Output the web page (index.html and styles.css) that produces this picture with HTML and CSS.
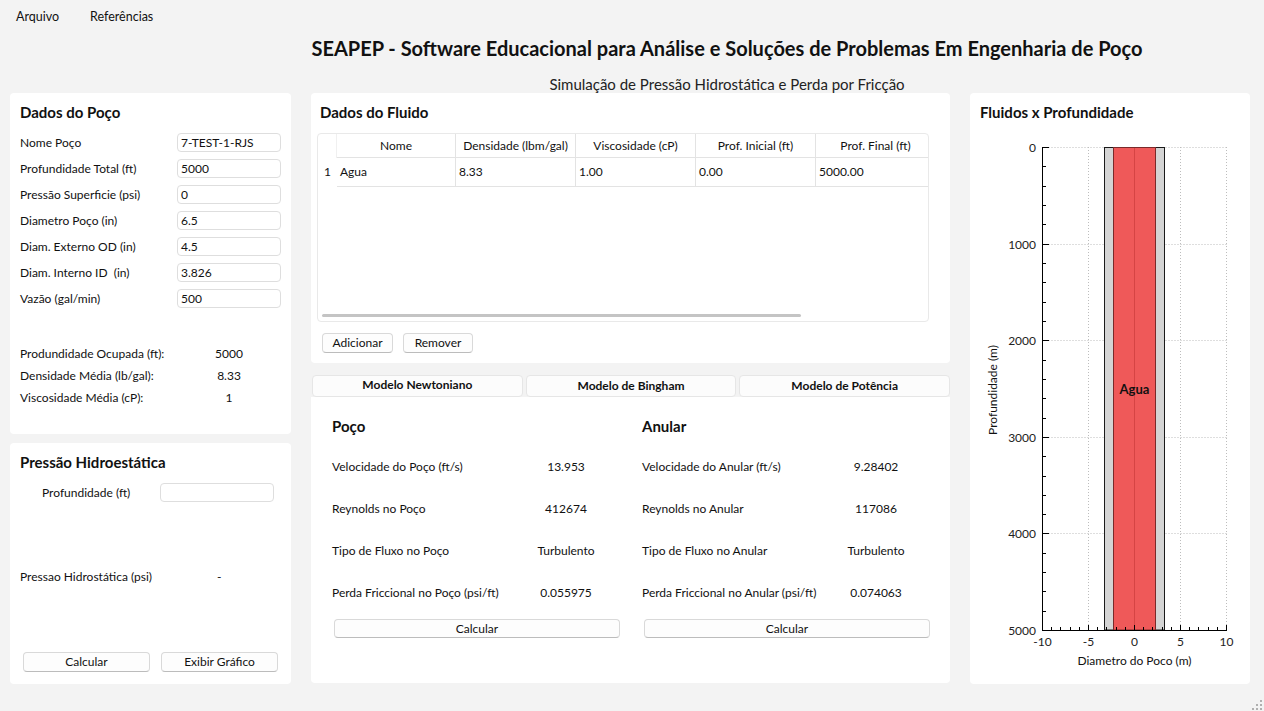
FILE: index.html
```
<!DOCTYPE html>
<html lang="pt">
<head>
<meta charset="utf-8">
<title>SEAPEP</title>
<link rel="stylesheet" href="styles.css">
</head>
<body>
<div class="menubar">
  <span class="menu-item">Arquivo</span>
  <span class="menu-item">Referências</span>
</div>
<div class="header">
  <div class="title">SEAPEP - Software Educacional para Análise e Soluções de Problemas Em Engenharia de Poço</div>
  <div class="subtitle">Simulação de Pressão Hidrostática e Perda por Fricção</div>
</div>
<div class="main">
  <div class="col-left">
    <div class="panel panel-poco">
      <div class="panel-title">Dados do Poço</div>
      <div class="form-grid">
        <span class="lbl">Nome Poço</span><div class="input">7-TEST-1-RJS</div>
        <span class="lbl">Profundidade Total (ft)</span><div class="input">5000</div>
        <span class="lbl">Pressão Superficie (psi)</span><div class="input">0</div>
        <span class="lbl">Diametro Poço (in)</span><div class="input">6.5</div>
        <span class="lbl">Diam. Externo OD (in)</span><div class="input">4.5</div>
        <span class="lbl">Diam. Interno ID &nbsp;(in)</span><div class="input">3.826</div>
        <span class="lbl">Vazão (gal/min)</span><div class="input">500</div>
      </div>
      <div class="summary-grid">
        <span>Produndidade Ocupada (ft):</span><span class="val">5000</span>
        <span>Densidade Média (lb/gal):</span><span class="val">8.33</span>
        <span>Viscosidade Média (cP):</span><span class="val">1</span>
      </div>
    </div>
    <div class="panel panel-hidro">
      <div class="panel-title">Pressão Hidroestática</div>
      <div class="hidro-row">
        <span class="hidro-lbl">Profundidade (ft)</span><div class="input input-hidro"></div>
      </div>
      <div class="hidro-result">
        <span class="hidro-res-lbl">Pressao Hidrostática (psi)</span><span>-</span>
      </div>
      <div class="hidro-buttons">
        <div class="btn btn-calc-l">Calcular</div>
        <div class="btn btn-graf">Exibir Gráfico</div>
      </div>
    </div>
  </div>

  <div class="col-mid">
    <div class="panel panel-fluido">
      <div class="panel-title">Dados do Fluido</div>
      <div class="table">
        <div class="trow thead">
          <div class="cell idx hidx"></div>
          <div class="cell hc">Nome</div>
          <div class="cell hc">Densidade (lbm/gal)</div>
          <div class="cell hc">Viscosidade (cP)</div>
          <div class="cell hc">Prof. Inicial (ft)</div>
          <div class="cell hc">Prof. Final (ft)</div>
        </div>
        <div class="trow tdata">
          <div class="cell idx">1</div>
          <div class="cell dc">Agua</div>
          <div class="cell dc">8.33</div>
          <div class="cell dc">1.00</div>
          <div class="cell dc">0.00</div>
          <div class="cell dc">5000.00</div>
        </div>
        <div class="hscroll"></div>
      </div>
      <div class="fluid-buttons">
        <div class="btn btn-add">Adicionar</div>
        <div class="btn btn-rem">Remover</div>
      </div>
    </div>
    <div class="tabs">
      <div class="tab tab-active">Modelo Newtoniano</div>
      <div class="tab">Modelo de Bingham</div>
      <div class="tab">Modelo de Potência</div>
    </div>
    <div class="tab-content">
      <div class="res-col">
        <div class="res-title">Poço</div>
        <div class="res-row"><span class="res-lbl">Velocidade do Poço (ft/s)</span><span class="res-val">13.953</span></div>
        <div class="res-row"><span class="res-lbl">Reynolds no Poço</span><span class="res-val">412674</span></div>
        <div class="res-row"><span class="res-lbl">Tipo de Fluxo no Poço</span><span class="res-val">Turbulento</span></div>
        <div class="res-row"><span class="res-lbl">Perda Friccional no Poço (psi/ft)</span><span class="res-val">0.055975</span></div>
        <div class="btn btn-res">Calcular</div>
      </div>
      <div class="res-col res-col-right">
        <div class="res-title">Anular</div>
        <div class="res-row"><span class="res-lbl">Velocidade do Anular (ft/s)</span><span class="res-val">9.28402</span></div>
        <div class="res-row"><span class="res-lbl">Reynolds no Anular</span><span class="res-val">117086</span></div>
        <div class="res-row"><span class="res-lbl">Tipo de Fluxo no Anular</span><span class="res-val">Turbulento</span></div>
        <div class="res-row"><span class="res-lbl">Perda Friccional no Anular (psi/ft)</span><span class="res-val">0.074063</span></div>
        <div class="btn btn-res">Calcular</div>
      </div>
    </div>
  </div>

  <div class="col-right panel">
    <div class="panel-title chart-title">Fluidos x Profundidade</div>
    <svg class="chart" width="280" height="551" viewBox="0 0 280 551" xmlns="http://www.w3.org/2000/svg">
      <g stroke="#bdbdbd" stroke-width="1" stroke-dasharray="1 2" fill="none">
        <line x1="72.5" y1="14.5" x2="256.5" y2="14.5"/>
        <line x1="72.5" y1="111.5" x2="256.5" y2="111.5"/>
        <line x1="72.5" y1="207.5" x2="256.5" y2="207.5"/>
        <line x1="72.5" y1="304.5" x2="256.5" y2="304.5"/>
        <line x1="72.5" y1="400.5" x2="256.5" y2="400.5"/>
        <line x1="118.5" y1="14" x2="118.5" y2="497"/>
        <line x1="164.5" y1="14" x2="164.5" y2="497"/>
        <line x1="210.5" y1="14" x2="210.5" y2="497"/>
        <line x1="256.5" y1="14" x2="256.5" y2="497"/>
      </g>
      <rect x="134.5" y="14.5" width="60" height="482.5" fill="#d4d4d4" stroke="#1a1a1a" stroke-width="1"/>
      <rect x="143.5" y="14.5" width="42" height="482.5" fill="#ef5959" stroke="#7a2a2a" stroke-width="1"/>
      <line x1="164.5" y1="15" x2="164.5" y2="497" stroke="#d64444" stroke-width="1"/>
      <text x="164.5" y="261" class="chart-label" text-anchor="middle">Agua</text>
      <g stroke="#000" stroke-width="1">
        <line x1="72.5" y1="14" x2="72.5" y2="497.5"/>
        <line x1="72" y1="497.5" x2="257" y2="497.5"/>
        <line x1="72.5" y1="14.5" x2="79" y2="14.5"/>
        <line x1="72.5" y1="111.5" x2="79" y2="111.5"/>
        <line x1="72.5" y1="207.5" x2="79" y2="207.5"/>
        <line x1="72.5" y1="304.5" x2="79" y2="304.5"/>
        <line x1="72.5" y1="400.5" x2="79" y2="400.5"/>
        <line x1="72.5" y1="33.5" x2="76" y2="33.5"/>
        <line x1="72.5" y1="53.5" x2="76" y2="53.5"/>
        <line x1="72.5" y1="72.5" x2="76" y2="72.5"/>
        <line x1="72.5" y1="91.5" x2="76" y2="91.5"/>
        <line x1="72.5" y1="130.5" x2="76" y2="130.5"/>
        <line x1="72.5" y1="149.5" x2="76" y2="149.5"/>
        <line x1="72.5" y1="169.5" x2="76" y2="169.5"/>
        <line x1="72.5" y1="188.5" x2="76" y2="188.5"/>
        <line x1="72.5" y1="227.5" x2="76" y2="227.5"/>
        <line x1="72.5" y1="246.5" x2="76" y2="246.5"/>
        <line x1="72.5" y1="265.5" x2="76" y2="265.5"/>
        <line x1="72.5" y1="285.5" x2="76" y2="285.5"/>
        <line x1="72.5" y1="323.5" x2="76" y2="323.5"/>
        <line x1="72.5" y1="343.5" x2="76" y2="343.5"/>
        <line x1="72.5" y1="362.5" x2="76" y2="362.5"/>
        <line x1="72.5" y1="381.5" x2="76" y2="381.5"/>
        <line x1="72.5" y1="420.5" x2="76" y2="420.5"/>
        <line x1="72.5" y1="439.5" x2="76" y2="439.5"/>
        <line x1="72.5" y1="458.5" x2="76" y2="458.5"/>
        <line x1="72.5" y1="478.5" x2="76" y2="478.5"/>
        <line x1="118.5" y1="497" x2="118.5" y2="492"/>
        <line x1="164.5" y1="497" x2="164.5" y2="492"/>
        <line x1="210.5" y1="497" x2="210.5" y2="492"/>
        <line x1="256.5" y1="497" x2="256.5" y2="492"/>
        <line x1="81.5" y1="497" x2="81.5" y2="494"/>
        <line x1="90.5" y1="497" x2="90.5" y2="494"/>
        <line x1="100.5" y1="497" x2="100.5" y2="494"/>
        <line x1="109.5" y1="497" x2="109.5" y2="494"/>
        <line x1="127.5" y1="497" x2="127.5" y2="494"/>
        <line x1="136.5" y1="497" x2="136.5" y2="494"/>
        <line x1="146.5" y1="497" x2="146.5" y2="494"/>
        <line x1="155.5" y1="497" x2="155.5" y2="494"/>
        <line x1="173.5" y1="497" x2="173.5" y2="494"/>
        <line x1="182.5" y1="497" x2="182.5" y2="494"/>
        <line x1="192.5" y1="497" x2="192.5" y2="494"/>
        <line x1="201.5" y1="497" x2="201.5" y2="494"/>
        <line x1="219.5" y1="497" x2="219.5" y2="494"/>
        <line x1="228.5" y1="497" x2="228.5" y2="494"/>
        <line x1="238.5" y1="497" x2="238.5" y2="494"/>
        <line x1="247.5" y1="497" x2="247.5" y2="494"/>
      </g>
      <g class="tick-label" text-anchor="end">
        <text x="66" y="18.5">0</text>
        <text x="66" y="115.5">1000</text>
        <text x="66" y="211.5">2000</text>
        <text x="66" y="308.5">3000</text>
        <text x="66" y="404.5">4000</text>
        <text x="66" y="501.5">5000</text>
      </g>
      <g class="tick-label" text-anchor="middle">
        <text x="72.5" y="513">-10</text>
        <text x="118.5" y="513">-5</text>
        <text x="164.5" y="513">0</text>
        <text x="210.5" y="513">5</text>
        <text x="256.5" y="513">10</text>
      </g>
      <text class="axis-title" x="164.5" y="532" text-anchor="middle">Diametro do Poco (m)</text>
      <text class="axis-title" x="0" y="0" text-anchor="middle" transform="translate(27 257) rotate(-90)">Profundidade (m)</text>
    </svg>
  </div>
</div>
<svg class="grip" width="10" height="10" viewBox="0 0 10 10" xmlns="http://www.w3.org/2000/svg">
  <g fill="#b0b0b0">
    <rect x="8" y="0" width="2" height="2"/>
    <rect x="4" y="4" width="2" height="2"/><rect x="8" y="4" width="2" height="2"/>
    <rect x="0" y="8" width="2" height="2"/><rect x="4" y="8" width="2" height="2"/><rect x="8" y="8" width="2" height="2"/>
  </g>
</svg>
</body>
</html>
```
FILE: styles.css
```
* { box-sizing: border-box; }
html, body { margin: 0; padding: 0; }
body {
  width: 1264px;
  height: 711px;
  overflow: hidden;
  position: relative;
  background: #f3f3f3;
  font-family: Lato, "Noto Sans", sans-serif;
  font-size: 12px;
  color: #111;
}

.menubar {
  height: 32px;
  display: flex;
  align-items: center;
  padding-left: 16px;
}
.menu-item { margin-right: 31px; font-size: 12.5px; }

.header { padding-left: 190px; text-align: center; }
.title {
  margin-top: 4px;
  line-height: 24px;
  font-size: 20px;
  font-weight: 700;
  color: #111;
}
.subtitle {
  margin-top: 15px;
  line-height: 18px;
  font-size: 15px;
  color: #222;
}

.main {
  display: flex;
  gap: 20px;
  padding: 0 10px;
  height: 591px;
}
.panel { background: #fff; border-radius: 4px; }
.panel-title {
  line-height: 20px;
  font-size: 15px;
  font-weight: 700;
  color: #111;
  padding-top: 9px;
}

.col-left { width: 281px; display: flex; flex-direction: column; gap: 9px; }
.panel-poco { height: 341px; padding: 0 10px; }
.form-grid {
  margin-top: 11px;
  display: grid;
  grid-template-columns: 157px 104px;
  grid-auto-rows: 19px;
  row-gap: 7px;
  align-items: center;
}
.input {
  height: 19px;
  border: 1px solid #dedede;
  border-radius: 4px;
  padding: 0 3px;
  line-height: 17px;
  background: #fff;
  white-space: nowrap;
  overflow: hidden;
}
.summary-grid {
  margin-top: 34px;
  display: grid;
  grid-template-columns: 170px 78px;
  grid-auto-rows: 22px;
  align-items: center;
}
.summary-grid .val { text-align: center; }

.panel-hidro { height: 241px; padding: 0 10px 12px; display: flex; flex-direction: column; }
.hidro-row { margin-top: 11px; display: flex; align-items: center; padding-left: 22px; }
.hidro-lbl { width: 118px; }
.input-hidro { width: 114px; }
.hidro-result { margin-top: 66px; display: flex; line-height: 18px; }
.hidro-res-lbl { width: 197px; }
.hidro-buttons { margin-top: auto; display: flex; gap: 11px; padding-left: 3px; }
.btn {
  height: 20px;
  background: #fdfdfd;
  border: 1px solid #d9d9d9;
  border-bottom-color: #bcbcbc;
  border-radius: 4px;
  text-align: center;
  line-height: 18px;
  color: #111;
}
.btn-calc-l { width: 127px; }
.btn-graf { width: 117px; }

.col-mid { width: 639px; display: flex; flex-direction: column; }
.panel-fluido { height: 270px; padding-left: 9px; }
.table {
  position: relative;
  margin-top: 11px;
  margin-left: -3px;
  width: 612px;
  height: 189px;
  border: 1px solid #e9e9e9;
  border-radius: 4px;
  overflow: hidden;
}
.trow { display: grid; grid-template-columns: 19px 119px 120px 120px 120px 120px; }
.thead { height: 24px; }
.tdata { height: 29px; }
.cell { white-space: nowrap; overflow: hidden; }
.hc {
  text-align: center;
  line-height: 23px;
  border-right: 1px solid #e3e3e3;
  border-bottom: 1px solid #e3e3e3;
}
.dc {
  line-height: 28px;
  padding-left: 3px;
  border-right: 1px solid #e3e3e3;
  border-bottom: 1px solid #e3e3e3;
}
.idx { text-align: center; line-height: 28px; }
.hidx { border-right: 1px solid #f0f0f0; }
.hscroll {
  position: absolute;
  left: 4px;
  bottom: 4px;
  width: 479px;
  height: 3px;
  border-radius: 2px;
  background: #c4c4c4;
}
.fluid-buttons { margin-top: 11px; display: flex; gap: 10px; padding-left: 2px; }
.btn-add { width: 71px; }
.btn-rem { width: 70px; }

.tabs { margin-top: 12px; display: flex; gap: 3px; height: 22px; padding-left: 1px; }
.tab {
  flex: 1;
  background: #fcfcfc;
  border: 1px solid #e6e6e6;
  border-radius: 4px;
  text-align: center;
  font-weight: 700;
  line-height: 20px;
  font-size: 12px;
  color: #111;
}
.tab-active { line-height: 18px; }
.tab-content {
  height: 286px;
  background: #fff;
  border-radius: 0 0 4px 4px;
  display: flex;
  padding-left: 21px;
}
.res-col { width: 310px; padding-top: 19px; }
.res-col-right { padding-left: 1px; }
.res-title { line-height: 20px; font-size: 15px; font-weight: 700; height: 20px; margin-bottom: 22px; }
.res-row { display: flex; height: 18px; line-height: 18px; margin-bottom: 24px; }
.res-lbl { width: 188px; white-space: nowrap; }
.res-val { width: 92px; text-align: center; }
.btn-res { width: 286px; height: 19px; line-height: 17px; margin-top: -7px; margin-left: 2px; }

.col-right { width: 280px; display: flex; flex-direction: column; }
.chart-title { padding-left: 10px; height: 40px; }
.chart { display: block; }
.tick-label { font-size: 12px; fill: #222; }
.axis-title { font-size: 12px; fill: #111; }
.chart-label { font-size: 13px; font-weight: 700; fill: #111; }

.grip { position: absolute; right: 2px; bottom: 1px; }
```
